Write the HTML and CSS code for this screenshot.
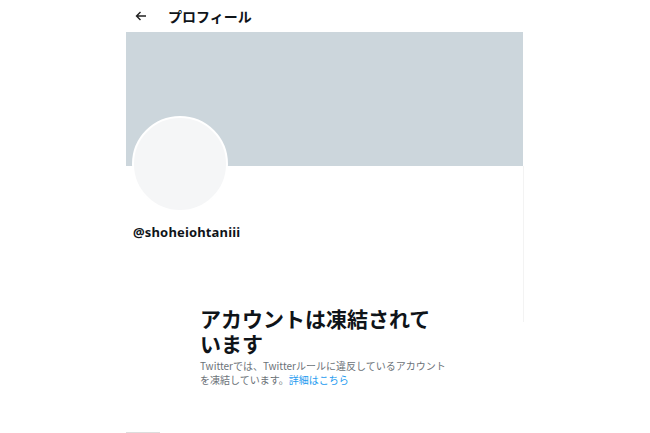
FILE: index.html
```html
<!DOCTYPE html>
<html lang="ja">

<head>
    <meta charset="UTF-8">
    <meta name="viewport" content="width=device-width, initial-scale=1.0">
    <title>プロフィール</title>

    <link rel="stylesheet" href="styles.css">
</head>

<body>
    <div class="columna">
        <!-- cabecera -->
        <header class="cabecera">
            <span class="volver">
                <svg width="12" height="10" viewBox="0 0 12 10">
                    <path d="M11 5H1.5M5.5 1L1.5 5l4 4" fill="none" stroke="#222" stroke-width="1.4" />
                </svg>
            </span>
            <h1>プロフィール</h1>
        </header>

        <div class="banner"></div>

        <div class="perfil">
            <div class="avatar"></div>
            <p class="usuario">@shoheiohtaniii</p>
        </div>

        <section class="aviso">
            <h2>アカウントは凍結されて<br>います</h2>
            <p>Twitterでは、Twitterルールに違反しているアカウント<br>を凍結しています。<a href="#">詳細はこちら</a></p>
        </section>

        <div class="pie"></div>
    </div>
</body>

</html>
```

FILE: styles.css
```css
:root {
    --gris: #ccd6dc;
    --azul: #1d9bf0;
    --ff: "Noto Sans CJK JP", "Noto Sans", sans-serif;
}

body {
    margin: 0;
    font-family: var(--ff);
    background: #fff;
    color: #0f1419;
}

.columna {
    width: 397px;
    margin-left: 126px;
    min-height: 433px;
    display: flex;
    flex-direction: column;
}

.cabecera {
    height: 32px;
    display: flex;
    align-items: center;
    gap: 21px;
    padding-left: 9px;
}

.volver {
    display: flex;
}

.cabecera h1 {
    margin: 0;
    font-size: 14px;
    font-weight: 700;
    line-height: 1;
}

.banner {
    height: 134px;
    background: var(--gris);
}

.perfil {
    padding-left: 6px;
    box-shadow: 1px 0 0 #f3f3f3;
}

.avatar {
    width: 92px;
    height: 92px;
    margin-top: -50px;
    border-radius: 50%;
    background: #f5f6f7;
    border: 2px solid #fff;
}

.usuario {
    margin: 12px 0 0 1px;
    font-family: "Noto Sans", sans-serif;
    font-size: 13px;
    font-weight: 700;
    line-height: 16px;
    letter-spacing: 0.15px;
}

/* la sombra lateral solo baja hasta la mitad del aviso */
.aviso {
    padding: 66px 0 0 74px;
    height: 16px;
    box-shadow: 1px 0 0 #f3f3f3;
}

.aviso h2 {
    margin: 0;
    font-size: 21px;
    font-weight: 700;
    line-height: 25px;
}

.aviso p {
    margin: 3px 0 0;
    font-size: 10px;
    line-height: 14px;
    color: #6b7278;
}

.aviso a {
    color: var(--azul);
    text-decoration: none;
}

.pie {
    margin-top: auto;
    width: 34px;
    height: 1px;
    background: #ddd;
}
```
